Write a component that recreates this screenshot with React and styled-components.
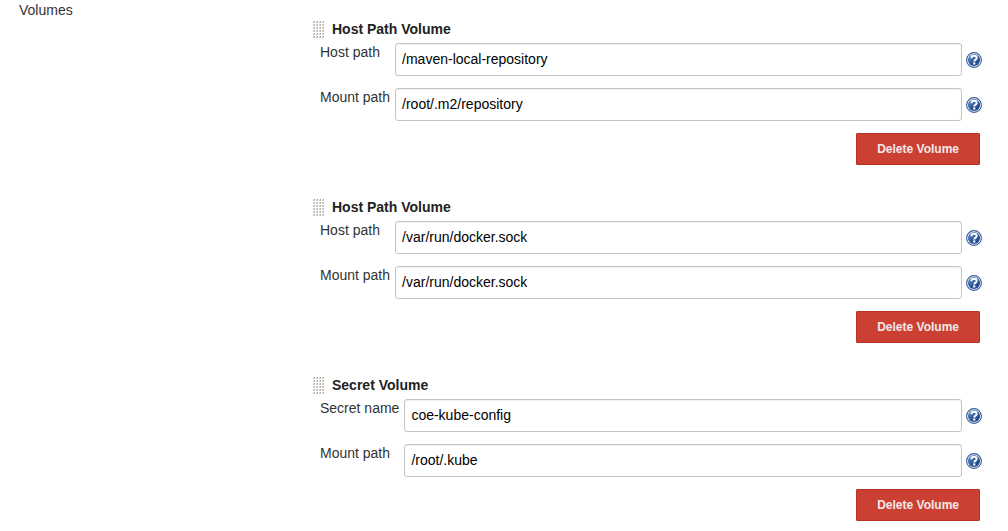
import React, { useId, useState } from 'react';
import styled, { createGlobalStyle } from 'styled-components';

const GlobalStyle = createGlobalStyle`
  *, *::before, *::after { box-sizing: border-box; }
  body {
    margin: 0;
    background: #fff;
    color: #333;
    font: 14px/20px "Liberation Sans", Arial, sans-serif;
  }
`;

const Page = styled.main`
  display: flex;
  align-items: flex-start;
  padding: 0 26px 10px 19px;
`;

const SectionName = styled.h1`
  flex: 0 0 294px;
  margin: 0;
  font-size: 14px;
  font-weight: normal;
`;

const VolumeList = styled.div`
  flex: 1;
  min-width: 0;
  display: flex;
  flex-direction: column;
  gap: 33px;
  padding-top: 20px;
`;

const Volume = styled.section`
  display: flex;
  flex-direction: column;
`;

const VolumeHeader = styled.header`
  display: flex;
  align-items: flex-start;
  gap: 8px;
  height: 23px;
`;

const Grip = styled.svg`
  flex: none;
  margin-top: 1px;
  cursor: move;
`;

const VolumeTitle = styled.h2`
  margin: 0;
  color: #222;
  font-size: 14px;
  line-height: 18px;
  font-weight: bold;
`;

const Fields = styled.div`
  display: grid;
  grid-template-columns: auto 1fr auto;
  row-gap: 12px;
  padding-left: 7px;
`;

const FieldLabel = styled.label`
  margin-right: 5px;
  line-height: 18px;
`;

const TextInput = styled.input`
  width: 100%;
  min-width: 0;
  height: 33px;
  padding: 0 6px 2px;
  border: 1px solid #c4c4c4;
  border-radius: 3px;
  background: #fff;
  box-shadow: inset 0 1px 1px rgba(0, 0, 0, 0.06);
  color: #000;
  font: inherit;
`;

const HelpLink = styled.a`
  display: flex;
  align-self: center;
  margin-left: 4px;
`;

const DeleteButton = styled.button`
  align-self: flex-end;
  height: 32px;
  margin: 12px 2px 0 0;
  padding: 0 20px;
  border: 1px solid #b83325;
  border-radius: 1px;
  background: #cc4033;
  color: #f3e9e8;
  font: bold 12px/20px "Liberation Sans", Arial, sans-serif;
  cursor: pointer;
`;

const VOLUMES = [
  {
    title: 'Host Path Volume',
    fields: [['Host path', '/maven-local-repository'], ['Mount path', '/root/.m2/repository']],
  },
  {
    title: 'Host Path Volume',
    fields: [['Host path', '/var/run/docker.sock'], ['Mount path', '/var/run/docker.sock']],
  },
  {
    title: 'Secret Volume',
    fields: [['Secret name', 'coe-kube-config'], ['Mount path', '/root/.kube']],
  },
];

function DragHandle() {
  const dots = [];
  for (let row = 0; row < 6; row += 1) {
    for (let col = 0; col < 4; col += 1) {
      const x = col * 3;
      const y = row * 3;
      dots.push(
        <g key={`${row}-${col}`}>
          <path d={`M${x} ${y}h2v2h-2z`} fill="#c9c7c4" />
          <path d={`M${x} ${y}h1v1h-1z`} fill="#e4e2df" />
          <path d={`M${x + 1} ${y}h1v1h-1z`} fill="#aaa7a3" />
        </g>
      );
    }
  }
  return <Grip width="11" height="17" viewBox="0 0 11 17" aria-hidden="true">{dots}</Grip>;
}

function HelpIcon() {
  const gradient = useId();
  return (
    <svg width="16" height="16" viewBox="0 0 16 16" aria-hidden="true">
      <defs>
        <linearGradient id={gradient} x1="0" y1="0" x2="1" y2="1">
          <stop offset="0" stopColor="#7198c9" />
          <stop offset="0.55" stopColor="#2c5597" />
          <stop offset="1" stopColor="#204585" />
        </linearGradient>
      </defs>
      <circle cx="8" cy="8" r="7.4" fill="#fff" stroke="#355b98" strokeWidth="1.1" />
      <circle cx="8" cy="8" r="6.1" fill={`url(#${gradient})`} />
      <path
        d="M5.4 6.2C5.5 4.4 6.6 3.8 8.1 3.8s2.6.8 2.6 2.1c0 1.7-2.4 1.8-2.4 3.6"
        fill="none"
        stroke="#fff"
        strokeWidth="2"
      />
      <path d="M7.2 10.4h2.1v2.1H7.2z" fill="#fff" />
    </svg>
  );
}

function Field({ label, initialValue }) {
  const id = useId();
  const [value, setValue] = useState(initialValue);
  return (
    <>
      <FieldLabel htmlFor={id}>{label}</FieldLabel>
      <TextInput id={id} type="text" value={value} onChange={(e) => setValue(e.target.value)} />
      <HelpLink href="#help" aria-label={`Help for ${label}`}><HelpIcon /></HelpLink>
    </>
  );
}

export default function App() {
  return (
    <>
      <GlobalStyle />
      <Page>
        <SectionName>Volumes</SectionName>
        <VolumeList>
          {VOLUMES.map((volume, index) => (
            <Volume key={index}>
              <VolumeHeader>
                <DragHandle />
                <VolumeTitle>{volume.title}</VolumeTitle>
              </VolumeHeader>
              <Fields>
                {volume.fields.map(([label, value]) => (
                  <Field key={label} label={label} initialValue={value} />
                ))}
              </Fields>
              <DeleteButton type="button">Delete Volume</DeleteButton>
            </Volume>
          ))}
        </VolumeList>
      </Page>
    </>
  );
}
